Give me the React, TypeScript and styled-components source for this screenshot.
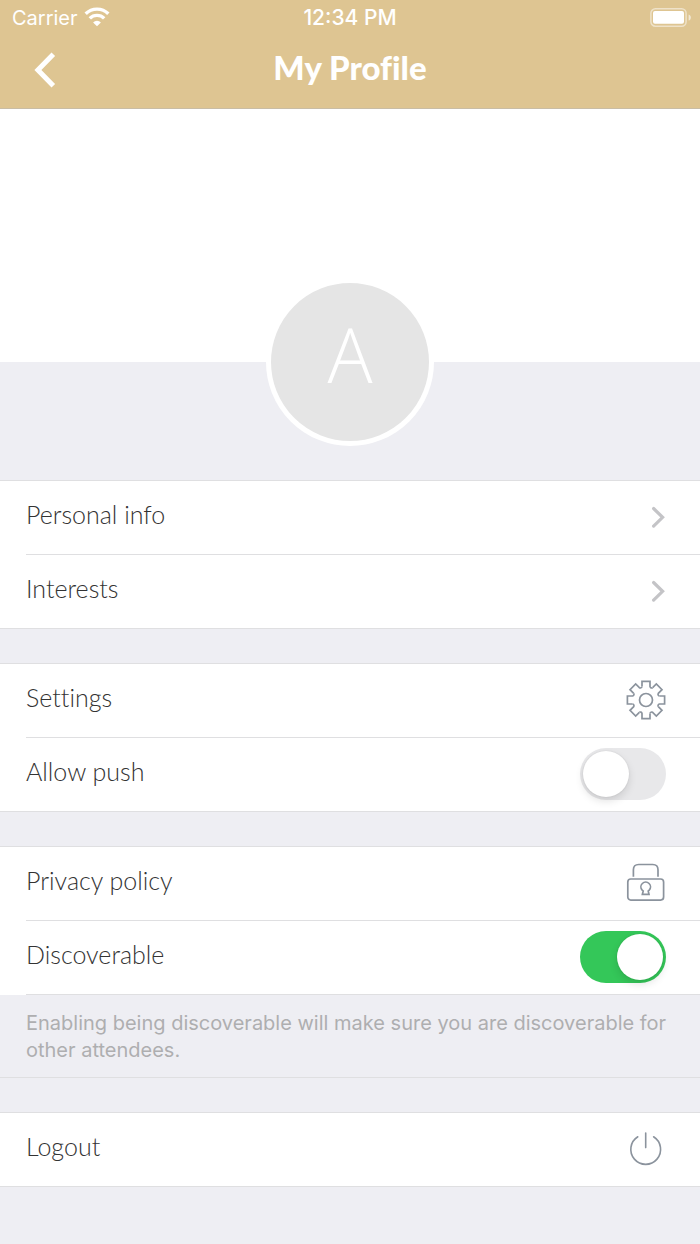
import React from "react";
import styled, { createGlobalStyle } from "styled-components";

const color = {
  sand: "#dec592",
  page: "#eeeef3",
  line: "#dfdfe1",
  text: "#333333",
  icon: "#8b939d",
  green: "#34c759",
};

const display = `Lato, "Liberation Sans", sans-serif`;
const system = `Inter, "Liberation Sans", sans-serif`;

const GlobalStyle = createGlobalStyle`
  * { box-sizing: border-box; }
  body { margin: 0; background: ${color.page}; font-family: ${display}; color: ${color.text}; }
`;

const Screen = styled.div`
  min-height: 100vh;
  background: ${color.page};
`;

const Header = styled.header`
  background: ${color.sand};
  border-bottom: 1px solid #c9bda5;
  color: #fff;
`;

const StatusBar = styled.div`
  display: grid;
  grid-template-columns: 1fr auto 1fr;
  align-items: center;
  height: 36px;
  padding: 0 8px;
  font: 400 20px/36px ${system};
`;

const Carrier = styled.span`
  display: flex;
  align-items: center;
  gap: 6px;
  padding-left: 4px;
`;

const Clock = styled.span`
  font-weight: 500;
  font-size: 21px;
`;

const Battery = styled.svg`
  justify-self: end;
`;

const NavBar = styled.nav`
  display: grid;
  grid-template-columns: 74px 1fr 74px;
  align-items: center;
  height: 72px;
  padding: 0 8px 10px;
`;

const BackButton = styled.button`
  display: flex;
  justify-content: center;
  padding: 6px 0 0;
  border: 0;
  background: none;
  color: inherit;
`;

const Title = styled.h1`
  margin: 0;
  text-align: center;
  font: 900 33px/40px ${display};
  font-variant-ligatures: none;
`;

const Cover = styled.div`
  height: 253px;
  background: #fff;
`;

const AvatarBand = styled.div`
  display: flex;
  justify-content: center;
  height: 118px;
`;

const Avatar = styled.div`
  display: flex;
  align-items: center;
  justify-content: center;
  width: 168px;
  height: 168px;
  margin-top: -84px;
  padding-bottom: 16px;
  border: 5px solid #fff;
  border-radius: 50%;
  background: #e5e5e5;
  color: #fff;
  font: 300 75px/90px "Open Sans", ${display};
`;

const Groups = styled.main`
  display: flex;
  flex-direction: column;
  gap: 34px;
`;

const Group = styled.section`
  border-top: 1px solid ${color.line};
  border-bottom: 1px solid ${color.line};
`;

const List = styled.ul`
  margin: 0;
  padding: 0;
  list-style: none;
  background: #fff;
`;

const Item = styled.li<{ $ruled?: boolean }>`
  margin-left: 26px;
  border-bottom: ${(p) => (p.$ruled ? `1px solid ${color.line}` : "0")};
`;

const rowStyles = `
  display: flex;
  align-items: center;
  justify-content: space-between;
  width: 100%;
  min-height: 73px;
  padding: 0 34px 2px 0;
`;

const RowLink = styled.a`
  ${rowStyles}
  color: inherit;
  text-decoration: none;
`;

const RowButton = styled.button`
  ${rowStyles}
  border: 0;
  background: none;
  color: inherit;
  text-align: left;
`;

const RowLabel = styled.label`
  ${rowStyles}
`;

const RowText = styled.span`
  padding-bottom: 6px;
  font: 300 25px/32px ${display};
  font-variant-ligatures: none;
`;

const Switch = styled.input`
  appearance: none;
  flex: none;
  display: flex;
  align-items: center;
  width: 86px;
  height: 52px;
  margin: 0;
  padding: 0 3px;
  border-radius: 26px;
  background: #e8e8ea;

  &::before {
    content: "";
    width: 46px;
    height: 46px;
    border-radius: 50%;
    background: #fff;
    box-shadow: 0 4px 8px rgba(0, 0, 0, 0.12), 0 0 2px rgba(0, 0, 0, 0.1);
  }

  &:checked {
    justify-content: flex-end;
    background: ${color.green};
  }
`;

const Note = styled.p`
  margin: 0;
  padding: 15px 26px 13px;
  color: #aeaeb0;
  font: 400 20px/27px ${system};
`;

const WifiIcon = () => (
  <svg width="26" height="22" viewBox="0 0 26 22" fill="none" stroke="#fff" strokeWidth="3.4" aria-hidden="true">
    <path d="M1.7 6.8A16 16 0 0 1 24.3 6.8" />
    <path d="M5.8 11.4A10.2 10.2 0 0 1 20.2 11.4" />
    <path d="M13 19.2L9.1 15.4A5.6 5.6 0 0 1 16.9 15.4Z" fill="#fff" stroke="none" />
  </svg>
);

const BatteryIcon = () => (
  <Battery width="42" height="20" viewBox="0 0 42 20" fill="none" aria-hidden="true">
    <rect x="0.9" y="0.8" width="35.2" height="17.4" rx="4.5" stroke="#fff" strokeOpacity="0.5" strokeWidth="1.5" />
    <rect x="3" y="3" width="31" height="12.8" rx="2" fill="#fff" />
    <path d="M38.6 6.4C41.6 7.2 41.6 11.8 38.6 12.6Z" fill="#fff" fillOpacity="0.6" />
  </Battery>
);

const BackIcon = () => (
  <svg width="22" height="36" viewBox="0 0 22 36" fill="none" stroke="#fff" strokeWidth="5" aria-hidden="true">
    <path d="M19.3 2.2L3.9 18L19.3 33.8" />
  </svg>
);

const ChevronIcon = () => (
  <svg width="15" height="22" viewBox="0 0 15 22" fill="none" stroke="#c4c4c7" strokeWidth="3.2" strokeLinecap="round" aria-hidden="true">
    <path d="M2.6 2.5L11.6 11.3L2.6 20.1" />
  </svg>
);

const toothAngles = [0, 45, 90, 135, 180, 225, 270, 315];

/* One tooth and the rounded notch that follows it, turned about the centre. */
const GearIcon = () => (
  <svg width="40" height="40" viewBox="-20 -20 40 40" fill="none" stroke={color.icon} strokeWidth="1.7" aria-hidden="true">
    <circle r="6.5" />
    {toothAngles.map((angle) => (
      <path
        key={angle}
        transform={`rotate(${angle})`}
        d="M-4 -13.4V-18.6H4V-13.4A1.75 1.75 0 0 0 6.65 -12.3"
      />
    ))}
  </svg>
);

const LockIcon = () => (
  <svg width="40" height="40" viewBox="0 0 40 40" fill="none" stroke={color.icon} strokeWidth="1.7" aria-hidden="true">
    <path d="M7.4 13.8V6.8Q7.4 1.5 12.7 1.5H26.7Q32 1.5 32 6.8V13.8" />
    <rect x="1.8" y="16" width="35.8" height="21.1" rx="3" />
    <path d="M16.4 31.3L17.2 28L16.2 27.2A4.8 4.8 0 1 1 23.2 27.2L22.2 28L23 31.3Z" />
  </svg>
);

const PowerIcon = () => (
  <svg width="40" height="40" viewBox="0 0 40 40" fill="none" stroke={color.icon} strokeWidth="1.6" strokeLinecap="round" aria-hidden="true">
    <path d="M11.8 7.8A14.9 14.9 0 1 0 27.6 7.8" />
    <path d="M19.7 4V18.6" />
  </svg>
);

export default function App() {
  return (
    <Screen>
      <GlobalStyle />
      <Header>
        <StatusBar>
          <Carrier>
            Carrier
            <WifiIcon />
          </Carrier>
          <Clock>12:34 PM</Clock>
          <BatteryIcon />
        </StatusBar>
        <NavBar>
          <BackButton type="button" aria-label="Back">
            <BackIcon />
          </BackButton>
          <Title>My Profile</Title>
        </NavBar>
      </Header>
      <Cover />
      <AvatarBand>
        <Avatar>A</Avatar>
      </AvatarBand>
      <Groups>
        <Group>
          <List>
            <Item $ruled>
              <RowLink href="#personal-info">
                <RowText>Personal info</RowText>
                <ChevronIcon />
              </RowLink>
            </Item>
            <Item>
              <RowLink href="#interests">
                <RowText>Interests</RowText>
                <ChevronIcon />
              </RowLink>
            </Item>
          </List>
        </Group>
        <Group>
          <List>
            <Item $ruled>
              <RowLink href="#settings">
                <RowText>Settings</RowText>
                <GearIcon />
              </RowLink>
            </Item>
            <Item>
              <RowLabel htmlFor="allow-push">
                <RowText>Allow push</RowText>
                <Switch id="allow-push" type="checkbox" role="switch" />
              </RowLabel>
            </Item>
          </List>
        </Group>
        <Group>
          <List>
            <Item $ruled>
              <RowLink href="#privacy-policy">
                <RowText>Privacy policy</RowText>
                <LockIcon />
              </RowLink>
            </Item>
            <Item $ruled>
              <RowLabel htmlFor="discoverable">
                <RowText>Discoverable</RowText>
                <Switch id="discoverable" type="checkbox" role="switch" defaultChecked />
              </RowLabel>
            </Item>
          </List>
          <Note>
            Enabling being discoverable will make sure you are discoverable for other attendees.
          </Note>
        </Group>
        <Group>
          <List>
            <Item>
              <RowButton type="button">
                <RowText>Logout</RowText>
                <PowerIcon />
              </RowButton>
            </Item>
          </List>
        </Group>
      </Groups>
    </Screen>
  );
}
